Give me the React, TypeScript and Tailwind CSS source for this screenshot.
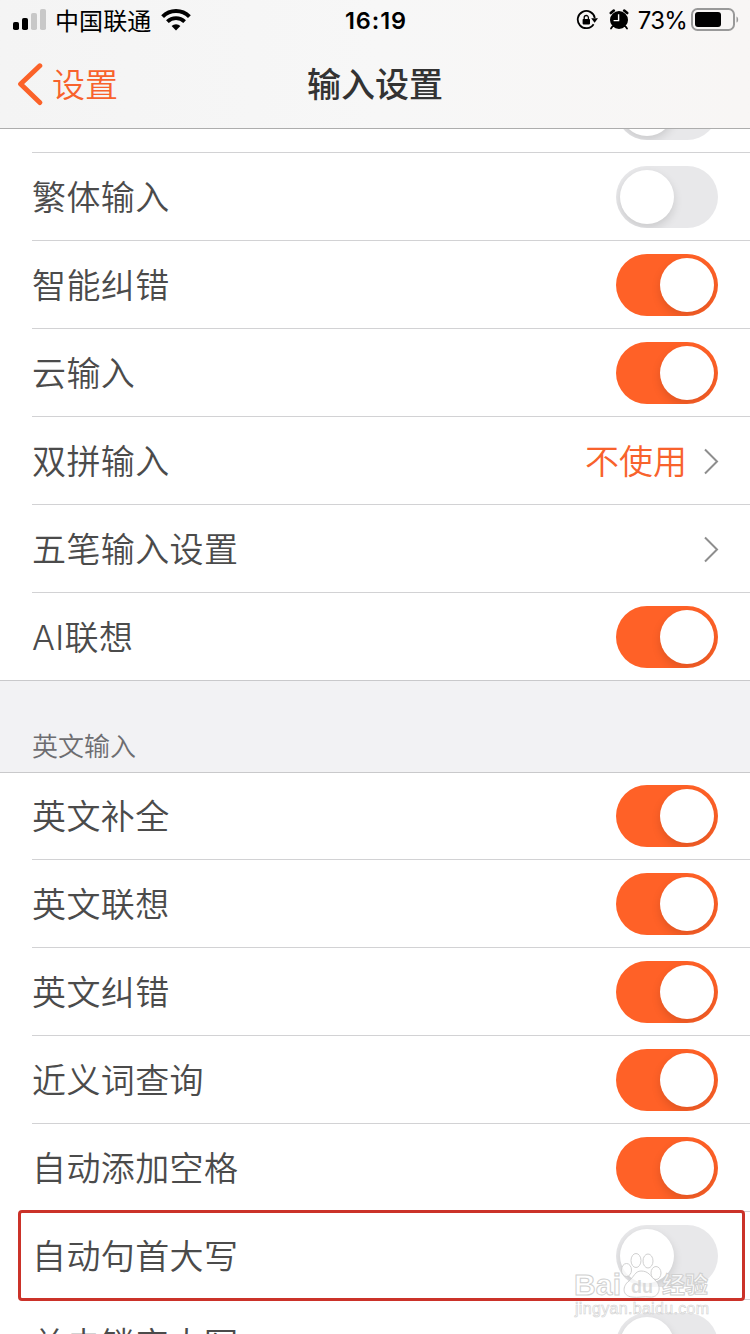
interface SwitchProps {
  on: boolean;
}

function Switch({ on }: SwitchProps) {
  return (
    <div
      className={
        on
          ? "flex h-[62px] w-[102px] shrink-0 items-center justify-end overflow-hidden rounded-full bg-[#ff6127] p-1"
          : "flex h-[62px] w-[102px] shrink-0 items-center justify-start overflow-hidden rounded-full bg-[#e8e8ea] p-1"
      }
    >
      <div className="h-[54px] w-[54px] rounded-full bg-white shadow-[0_4px_10px_rgba(0,0,0,0.13)]" />
    </div>
  );
}

function Chevron() {
  return (
    <svg className="h-[30px] w-[18px]" viewBox="0 0 18 30" fill="none">
      <path d="M3 3.5 15 15.5 3 27.5" stroke="#8e8e8e" strokeWidth="2" />
    </svg>
  );
}

interface RowProps {
  label: string;
  on?: boolean;
  value?: string;
  last?: boolean;
  highlighted?: boolean;
}

function Row({ label, on, value, last, highlighted }: RowProps) {
  return (
    <div className="relative h-[88px] shrink-0">
      <div
        className={
          last
            ? "flex h-[88px] items-start justify-between border-b border-[#c9c9cb] pr-8 pl-8"
            : "ml-8 flex h-[88px] items-start justify-between border-b border-[#d2d2d4] pr-8"
        }
      >
        <span className="mt-5 text-[34px] leading-[50px] font-[350] tracking-[0.4px] whitespace-nowrap text-[#4b4b4b]">
          {label}
        </span>
        {on !== undefined ? (
          <div className="mt-[13px]">
            <Switch on={on} />
          </div>
        ) : (
          <div className="-mr-[2px] flex h-full items-center gap-[15px]">
            {value && (
              <span className="mt-[2px] text-[34px] leading-[50px] font-[350] text-[#f8622c]">{value}</span>
            )}
            <Chevron />
          </div>
        )}
      </div>
      {/* Marker frame */}
      {highlighted && (
        <div className="absolute -top-[2px] left-[18px] z-10 h-[91px] w-[727px] rounded-[4px] border-3 border-[#cb3229]" />
      )}
    </div>
  );
}

function StatusBar() {
  return (
    <div className="flex h-10 items-center justify-between pr-[11px] pl-[13px] text-black">
      <div className="flex w-[300px] items-center">
        <svg className="h-[22px] w-[34px]" viewBox="0 0 34 22">
          <rect x="0" y="13" width="6" height="8" rx="1.8" />
          <rect x="9" y="9" width="6" height="12" rx="1.8" />
          <rect x="18" y="4" width="6" height="17" rx="1.8" fill="#c8c8c8" />
          <rect x="27" y="0" width="6" height="21" rx="1.8" fill="#c8c8c8" />
        </svg>
        <span className="mt-[3px] ml-2 text-[24px] leading-8 tracking-[0.1px]">中国联通</span>
        <svg className="ml-[10px] h-[22px] w-[30px]" viewBox="0 0 30 22" fill="none">
          <path d="M1.6 7.6a19 19 0 0 1 26.8 0" stroke="#000" strokeWidth="4" />
          <path d="M6.4 12.6a12.2 12.2 0 0 1 17.2 0" stroke="#000" strokeWidth="3.8" />
          <path d="M10.6 17a6.2 6.2 0 0 1 8.8 0L15 21.4Z" fill="#000" />
        </svg>
      </div>
      <span className="mt-[2px] text-[23.5px] leading-8 font-semibold tracking-[0.9px]">16:19</span>
      <div className="flex w-[300px] items-center justify-end">
        {/* Rotation lock */}
        <svg className="h-[22px] w-[22px]" viewBox="0 0 22 22" fill="none">
          <path d="M17.6 15.2A8.6 8.6 0 1 1 18.8 9" stroke="#000" strokeWidth="1.8" />
          <path d="M15.2 9.2H22l-3.4 4.6Z" fill="#000" />
          <rect x="6.6" y="10" width="7.4" height="5.4" rx="0.8" fill="#000" />
          <path d="M8.2 10.4V8.6a2.1 2.1 0 0 1 4.2 0v1.8" stroke="#000" strokeWidth="1.3" />
        </svg>
        {/* Alarm */}
        <svg className="ml-[11px] h-[22px] w-[20px]" viewBox="0 0 20 22" fill="none">
          <circle cx="10" cy="11" r="9" fill="#000" />
          <path d="M1.8 4 4.8 1.6M18.2 4 15.2 1.6" stroke="#000" strokeWidth="2.6" strokeLinecap="round" />
          <path d="m3.4 17.6-1.4 2M16.6 17.6l1.4 2" stroke="#000" strokeWidth="1.8" strokeLinecap="round" />
          <path d="M9.6 5.2v6.4H4.6" stroke="#fff" strokeWidth="1.4" />
        </svg>
        <span className="mt-[2px] ml-[9px] text-[24px] leading-8 tracking-[-0.8px]">73%</span>
        <svg className="ml-1 h-6 w-12" viewBox="0 0 48 24" fill="none">
          <rect x="1" y="1" width="42" height="21" rx="5.5" stroke="#999" strokeWidth="2" />
          <rect x="4" y="4" width="26" height="15" rx="3" fill="#000" />
          <path d="M45.5 8.4c2.2 1 2.2 5.2 0 6.2Z" fill="#999" />
        </svg>
      </div>
    </div>
  );
}

function NavBar() {
  return (
    <div className="flex h-[88px] items-center justify-between pr-4 pl-4">
      <div className="flex w-[240px] items-center">
        <svg className="h-11 w-7" viewBox="0 0 28 44" fill="none">
          <path
            d="M23.8 3.8 4.6 22l19.2 18.5"
            stroke="#fb6229"
            strokeWidth="5"
            strokeLinecap="round"
            strokeLinejoin="round"
          />
        </svg>
        <span className="mt-[2px] ml-2 text-[33px] leading-[50px] font-[350] text-[#f8622c]">设置</span>
      </div>
      <span className="mt-[2px] text-[34px] leading-[50px] font-medium text-[#333]">输入设置</span>
      <div className="w-[240px]" />
    </div>
  );
}

function Watermark() {
  return (
    <svg
      className="absolute top-[1248px] left-[570px] h-[72px] w-[146px]"
      viewBox="0 0 146 72"
      fill="#fff"
      fillOpacity="0.75"
      stroke="#d0d0d0"
      strokeWidth="1"
    >
      <ellipse cx="56.5" cy="22" rx="5" ry="6.5" />
      <ellipse cx="66" cy="12.5" rx="5" ry="7" />
      <ellipse cx="78" cy="13" rx="5" ry="7" />
      <ellipse cx="86" cy="25" rx="5" ry="6.5" />
      <path d="M71 23c-6 0-7 6-12 10-7 5-7 15 3 16 6 1 12-1 18 0 9 1 12-10 6-16-6-5-7-10-15-10Z" />
      <text x="4" y="47" textLength="47" className="font-['Liberation_Sans'] text-[30px] font-bold">
        Bai
      </text>
      <text x="61" y="45" fill="#cfcfcf" stroke="none" className="font-['Liberation_Sans'] text-[18px] font-bold">
        du
      </text>
      <text x="92" y="45" className="text-[23px] font-bold">
        经验
      </text>
      <text
        x="5"
        y="66"
        textLength="134"
        strokeWidth="0.6"
        className="font-['Liberation_Sans'] text-[16px]"
      >
        jingyan.baidu.com
      </text>
    </svg>
  );
}

export default function App() {
  return (
    <div className="relative flex h-[1334px] w-[750px] flex-col overflow-hidden bg-white font-['Inter','Noto_Sans_CJK_SC',sans-serif]">
      <header className="h-[129px] shrink-0 border-b border-[#adadad] bg-linear-to-r from-[#f4f4f4] via-[#f7f7f7] to-[#f8f6f5]">
        <StatusBar />
        <NavBar />
      </header>

      <main className="flex min-h-0 flex-1 flex-col overflow-hidden">
        {/* Row scrolled under the header */}
        <div className="ml-8 flex h-6 shrink-0 items-end justify-end overflow-hidden border-b border-[#d2d2d4] pr-8 pb-3">
          <Switch on={false} />
        </div>
        <Row label="繁体输入" on={false} />
        <Row label="智能纠错" on />
        <Row label="云输入" on />
        <Row label="双拼输入" value="不使用" />
        <Row label="五笔输入设置" />
        <Row label="AI联想" on last />

        <div className="h-[92px] shrink-0 border-b border-[#c9c9cb] bg-[#f2f2f4] pt-[47px] pl-8 text-[26px] leading-[38px] font-[350] text-[#6d6d70]">
          英文输入
        </div>

        <div className="-mt-px flex flex-col">
          <Row label="英文补全" on />
          <Row label="英文联想" on />
          <Row label="英文纠错" on />
          <Row label="近义词查询" on />
          <Row label="自动添加空格" on />
          <Row label="自动句首大写" on={false} highlighted />
          <Row label="单击锁定大写" on={false} />
        </div>
      </main>

      <Watermark />
    </div>
  );
}
